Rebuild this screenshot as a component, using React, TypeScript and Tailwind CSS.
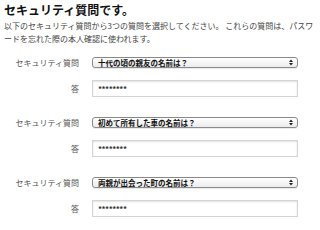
import React from 'react';

const questions = [
    '十代の頃の親友の名前は？',
    '初めて所有した車の名前は？',
    '両親が出会った町の名前は？',
];

const font = { fontFamily: '"Noto Sans CJK JP", "Liberation Sans", sans-serif' };

const SelectBox: React.FC<{ value: string }> = ({ value }) => (
    <div className="flex items-center justify-between w-[206px] h-[11px] rounded-[3px] border border-[#8a8a8a] bg-gradient-to-b from-white to-[#ececec] pl-[5px] pr-[4px] shadow-[0_1px_0_rgba(0,0,0,0.08)]">
        <span className="text-[7.5px] font-bold text-[#111] leading-none">{value}</span>
        <svg width="4" height="7" viewBox="0 0 4 7">
            <path d="M0 3 L2 0.5 L4 3 Z M0 4 L2 6.5 L4 4 Z" fill="#222" />
        </svg>
    </div>
);

export default function App() {
    return (
        <div className="w-[320px] h-[230px] bg-white overflow-hidden text-[#333]" style={font}>
            <div className="px-[4px] pt-[1px]">
                <h2 className="text-[12px] font-bold text-[#111] leading-[17px]">セキュリティ質問です。</h2>
                <p className="text-[8px] leading-[13px] text-[#444] mt-[1px]">
                    以下のセキュリティ質問から3つの質問を選択してください。 これらの質問は、パスワードを忘れた際の本人確認に使われます。
                </p>
            </div>

            <div className="mt-[12px] flex flex-col gap-[20px]">
                {questions.map((q, i) => (
                    <div key={i} className="flex flex-col gap-[12px]">
                        <div className="flex items-center">
                            <span className="w-[79px] text-right text-[8px] text-[#555] leading-none">セキュリティ質問</span>
                            <div className="ml-[13px]">
                                <SelectBox value={q} />
                            </div>
                        </div>
                        <div className="flex items-center">
                            <span className="w-[79px] text-right text-[8px] text-[#555] leading-none">答</span>
                            <div className="ml-[13px] w-[206px] h-[17px] border border-[#d4d4d4] bg-white shadow-[inset_0_1px_2px_rgba(0,0,0,0.12)] flex items-center pl-[5px]">
                                <span className="text-[8px] font-bold text-[#333] tracking-[-0.5px] leading-none">********</span>
                            </div>
                        </div>
                    </div>
                ))}
            </div>
        </div>
    );
}
